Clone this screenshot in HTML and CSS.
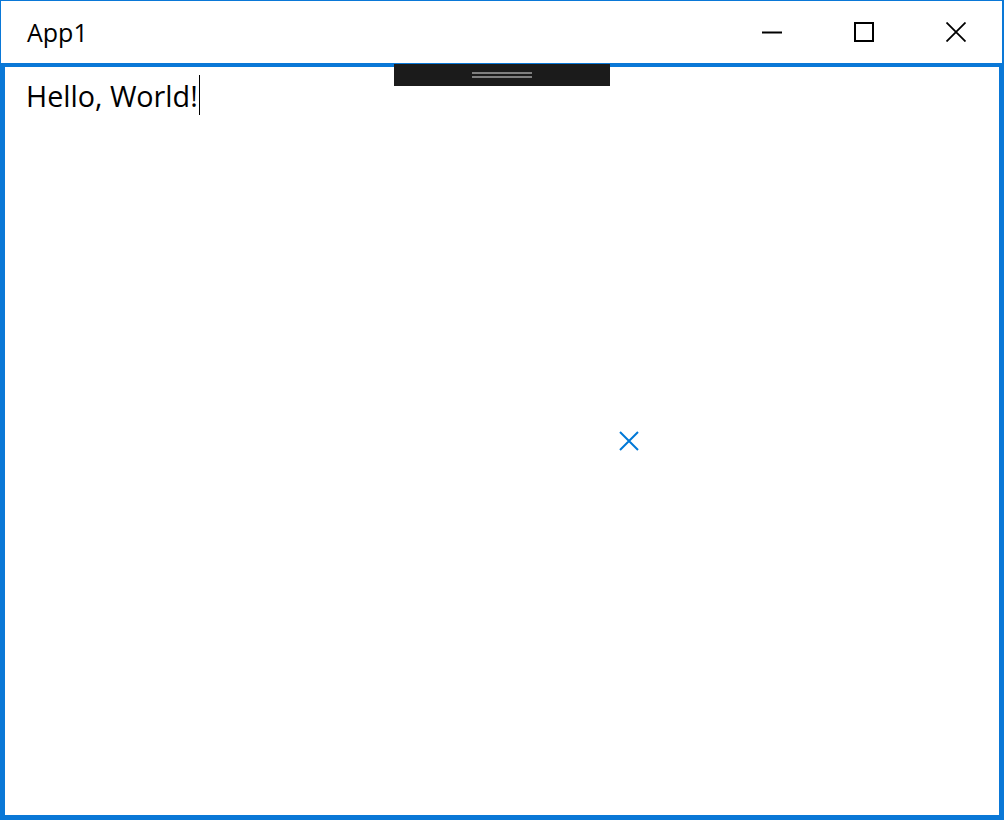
FILE: index.html
```html
<!DOCTYPE html>
<html>
<head>
<meta charset="utf-8">
<title>App1</title>
<link rel="stylesheet" href="styles.css">
</head>
<body>
<div class="window">
  <div class="titlebar">
    <div class="title">App1</div>
    <div class="controls">
      <div class="btn">
        <svg width="20" height="20" viewBox="0 0 20 20"><path d="M0 10.5H20" stroke="#000" stroke-width="2" fill="none"/></svg>
      </div>
      <div class="btn">
        <svg width="20" height="20" viewBox="0 0 20 20"><rect x="1" y="1" width="18" height="18" stroke="#000" stroke-width="2" fill="none"/></svg>
      </div>
      <div class="btn">
        <svg width="20" height="20" viewBox="0 0 20 20"><path d="M0.5 0.5L19.5 19.5M19.5 0.5L0.5 19.5" stroke="#000" stroke-width="1.8" fill="none"/></svg>
      </div>
    </div>
  </div>
  <div class="content">
    <div class="textline"><span class="hello">Hello, World!</span><span class="caret"></span></div>
    <div class="handle"><span class="grip"></span><span class="grip"></span></div>
    <svg class="cross" width="20" height="20" viewBox="0 0 20 20"><path d="M1 1L19 19M19 1L1 19" stroke="#0078d7" stroke-width="2" fill="none"/></svg>
  </div>
</div>
</body>
</html>
```
FILE: styles.css
```css
html, body {
  margin: 0;
  padding: 0;
  background: #fff;
}
body {
  font-family: "Open Sans", "Noto Sans", "Liberation Sans", sans-serif;
  color: #000;
}
.window {
  width: 1004px;
  height: 820px;
  box-sizing: border-box;
  border-top: 1px solid #0a78d7;
  border-left: 1px solid #0a78d7;
  border-right: 2px solid #0a78d7;
  border-bottom: 2px solid #0a78d7;
  display: flex;
  flex-direction: column;
}
.titlebar {
  height: 62px;
  display: flex;
  align-items: center;
  justify-content: space-between;
  flex: none;
}
.title {
  padding-left: 26px;
  font-size: 25px;
  line-height: 30px;
  margin-top: -1px;
}
.controls {
  display: flex;
  height: 100%;
}
.btn {
  width: 92px;
  height: 100%;
  display: flex;
  align-items: center;
  justify-content: center;
}
.btn svg { display: block; }
.content {
  flex: 1;
  position: relative;
  border-top: 4px solid #0a78d7;
  border-left: 4px solid #0a78d7;
  border-right: 3px solid #0a78d7;
  border-bottom: 3px solid #0a78d7;
  padding: 8px 0 0 21px;
}
.textline {
  display: flex;
  align-items: stretch;
  height: 40px;
}
.hello {
  font-size: 28.7px;
  line-height: 40px;
  margin-top: 1px;
}
.caret {
  width: 1px;
  background: #000;
  margin-left: 1px;
}
.handle {
  position: absolute;
  left: 389px;
  top: -3px;
  width: 216px;
  height: 22px;
  background: #1b1b1b;
  display: flex;
  flex-direction: column;
  align-items: center;
  justify-content: center;
  gap: 2px;
}
.grip {
  display: block;
  width: 60px;
  height: 2px;
  background: #7f7f7f;
}
.cross {
  position: absolute;
  left: 614px;
  top: 364px;
}
```
